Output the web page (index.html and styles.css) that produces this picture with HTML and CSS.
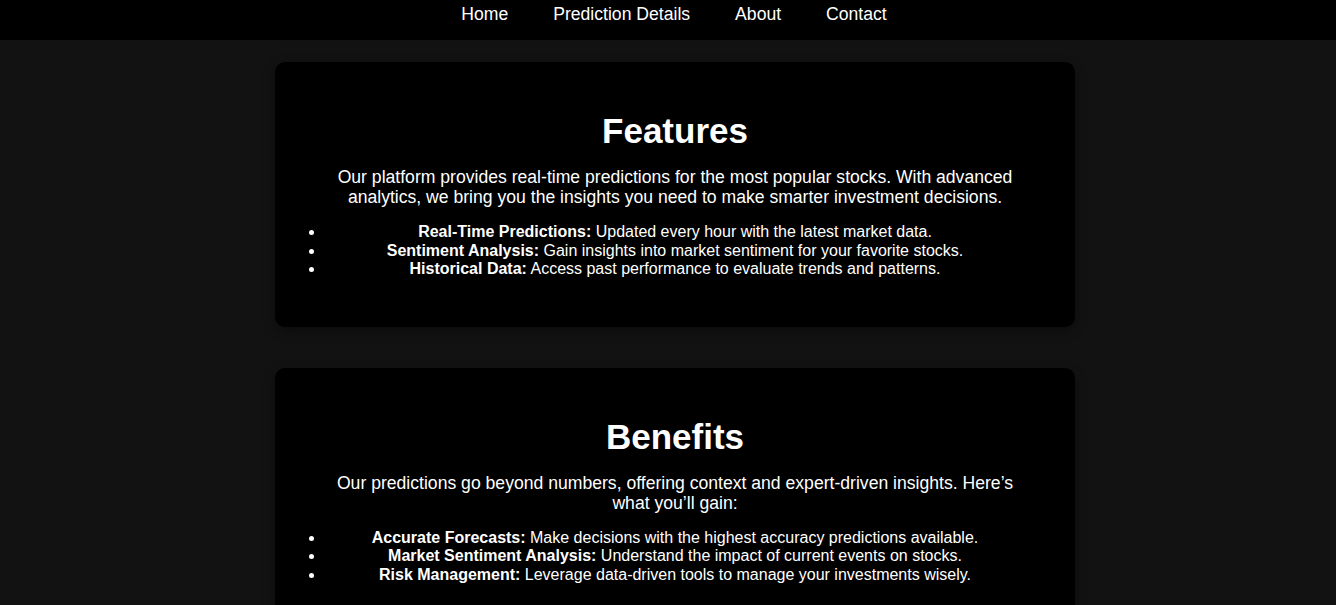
FILE: index.html
```html
<!DOCTYPE html>
<html lang="en">
<head>
<meta charset="utf-8">
<title>Stock Predictions</title>
<link rel="stylesheet" href="styles.css">
</head>
<body>
<nav class="topnav">
  <a href="#">Home</a>
  <a href="#">Prediction Details</a>
  <a href="#">About</a>
  <a href="#">Contact</a>
</nav>
<main class="content">
  <section class="card">
    <h2>Features</h2>
    <p>Our platform provides real-time predictions for the most popular stocks. With advanced analytics, we bring you the insights you need to make smarter investment decisions.</p>
    <ul>
      <li><strong>Real-Time Predictions:</strong> Updated every hour with the latest market data.</li>
      <li><strong>Sentiment Analysis:</strong> Gain insights into market sentiment for your favorite stocks.</li>
      <li><strong>Historical Data:</strong> Access past performance to evaluate trends and patterns.</li>
    </ul>
  </section>
  <section class="card">
    <h2>Benefits</h2>
    <p>Our predictions go beyond numbers, offering context and expert-driven insights. Here’s what you’ll gain:</p>
    <ul>
      <li><strong>Accurate Forecasts:</strong> Make decisions with the highest accuracy predictions available.</li>
      <li><strong>Market Sentiment Analysis:</strong> Understand the impact of current events on stocks.</li>
      <li><strong>Risk Management:</strong> Leverage data-driven tools to manage your investments wisely.</li>
    </ul>
  </section>
</main>
</body>
</html>
```
FILE: styles.css
```css
html, body {
  margin: 0;
  padding: 0;
}
body {
  background: #121212;
  color: #fff;
  font-family: "Liberation Sans", Arial, sans-serif;
  font-size: 16px;
}
.topnav {
  background: #000;
  height: 40px;
  display: flex;
  justify-content: center;
  align-items: flex-start;
  gap: 45px;
  padding: 4px 0 0 12px;
  box-sizing: border-box;
}
.topnav a {
  color: #fff;
  text-decoration: none;
  font-size: 17.6px;
  line-height: 20px;
}
.content {
  display: flex;
  flex-direction: column;
  align-items: center;
  gap: 41px;
  padding: 22px 0 0 14px;
}
.card {
  width: 800px;
  box-sizing: border-box;
  background: #000;
  border-radius: 10px;
  box-shadow: 0 4px 12px rgba(0, 0, 0, 0.35);
  padding: 49px 45px 48px;
  text-align: center;
}
.card h2 {
  margin: 0 0 17px;
  font-size: 35px;
  font-weight: bold;
  line-height: 39px;
}
.card p {
  margin: 0;
  font-size: 17.6px;
  line-height: 20.2px;
}
.card ul {
  margin: 16px 0 0;
  padding: 0 5px;
}
.card li {
  line-height: 18.4px;
}
```
